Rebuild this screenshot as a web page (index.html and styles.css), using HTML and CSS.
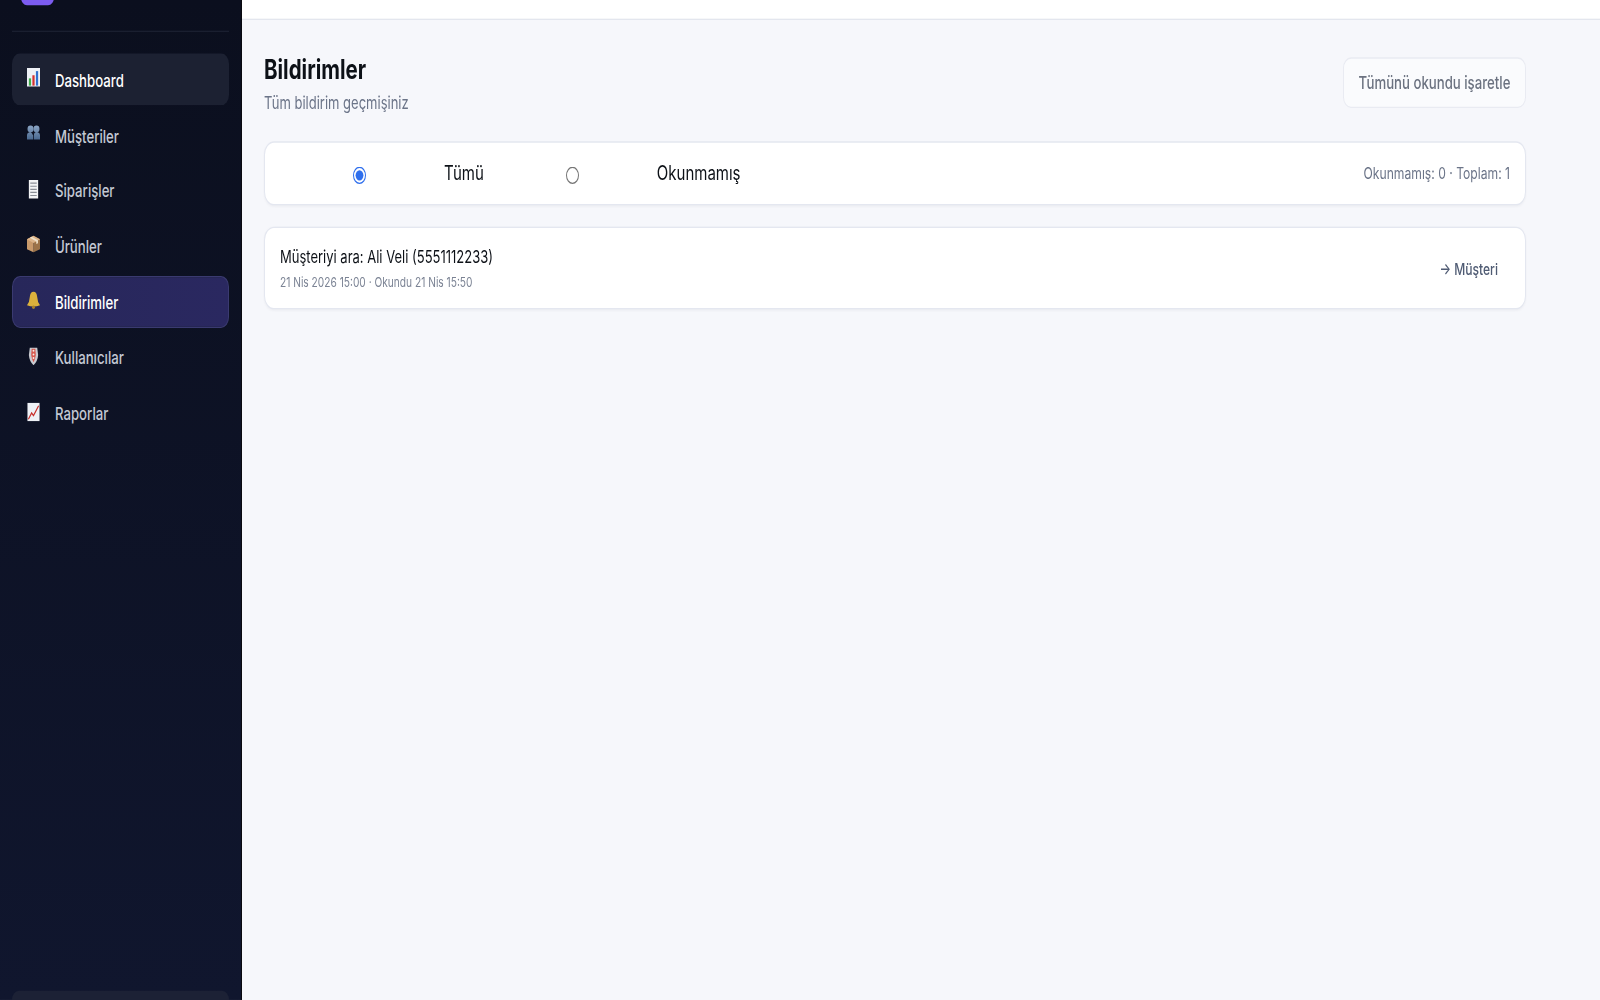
FILE: index.html
```html
<!DOCTYPE html>
<html lang="tr">
<head>
<meta charset="utf-8">
<title>Bildirimler</title>
<link rel="stylesheet" href="styles.css">
</head>
<body>
<div class="app">
  <aside class="sidebar">
    <div class="brand">
      <span class="logo"></span>
      <span class="brand-name">Kontrol yönetimi</span>
    </div>
    <nav class="nav">
      <a class="nav-item hover">
        <svg class="ico" viewBox="0 0 14 18" preserveAspectRatio="none"><rect x="0" y="0" width="14" height="18" fill="#eef1f6"/><rect x="2" y="10" width="2.4" height="7" fill="#3fae4a"/><rect x="5.8" y="7" width="2.4" height="10" fill="#d3322f"/><rect x="9.6" y="3" width="2.4" height="14" fill="#2f6fd0"/></svg>
        <span>Dashboard</span>
      </a>
      <a class="nav-item">
        <svg class="ico" viewBox="0 0 14 18" preserveAspectRatio="none"><defs><linearGradient id="people" x1="0" y1="0" x2="0" y2="1"><stop offset="0" stop-color="#8aa4c4"/><stop offset="1" stop-color="#49688f"/></linearGradient></defs><g fill="url(#people)"><path d="M3.800 1.500A3.200 3.200 0 0 1 3.800 8 6 6 0 0 1 6.600 11L6.600 15 0 15 0 11Q0 8 3.800 8A3.200 3.200 0 0 1 3.800 1.500Z"/><path d="M10.200 1.500A3.200 3.200 0 0 1 10.200 8Q14 8 14 11L14 15 7.400 15 7.400 11Q7.400 8 10.200 8A3.200 3.200 0 0 1 10.200 1.500Z"/></g></svg>
        <span>Müşteriler</span>
      </a>
      <a class="nav-item">
        <svg class="ico" viewBox="0 0 14 18" preserveAspectRatio="none"><rect x="2" y="0" width="10" height="18" fill="#f2f3f5"/><path d="M3.500 3H10.500M3.500 6H10.500M3.500 9H10.500M3.500 12H10.500M3.500 15H10.500" stroke="#8b8f97" stroke-width="1.100"/></svg>
        <span>Siparişler</span>
      </a>
      <a class="nav-item">
        <svg class="ico" viewBox="0 0 14 18" preserveAspectRatio="none"><path d="M7 1 14 4.500 14 14 7 17Z" fill="#9c7349"/><path d="M7 1 0 4.500 0 14 7 17Z" fill="#c99a6b"/><path d="M0 4.500 7 8 14 4.500 7 1Z" fill="#dcb48a"/><path d="M3.200 2.900 10 6.500 10 9 11.800 8.200 11.800 5.500 5 2Z" fill="#efe0c8"/></svg>
        <span>Ürünler</span>
      </a>
      <a class="nav-item active">
        <svg class="ico" viewBox="0 0 14 18" preserveAspectRatio="none"><path d="M7 1Q10.500 1 11 6 11.300 11 14 14 7 16.500 0 14 2.700 11 3 6 3.500 1 7 1Z" fill="#dcb13c"/><circle cx="7" cy="16" r="1.600" fill="#a9812a"/></svg>
        <span>Bildirimler</span>
      </a>
      <a class="nav-item">
        <svg class="ico" viewBox="0 0 14 18" preserveAspectRatio="none"><path d="M3 1H11L12 8Q11.500 14 7 18 2.500 14 2 8Z" fill="#c9ccd2"/><path d="M5 2H9L9.500 8Q9 12 7 15 5 12 4.500 8Z" fill="#d85a50"/><g fill="#f2ece6"><circle cx="7" cy="4" r="1"/><circle cx="7" cy="7.500" r="1"/><circle cx="7" cy="11" r="1"/></g></svg>
        <span>Kullanıcılar</span>
      </a>
      <a class="nav-item">
        <svg class="ico" viewBox="0 0 14 18" preserveAspectRatio="none"><rect x="0.500" y="0" width="13" height="18" fill="#eef1f6"/><path d="M1.500 16 5 10 7 12.500 12.500 3" fill="none" stroke="#c8302c" stroke-width="1.300"/></svg>
        <span>Raporlar</span>
      </a>
    </nav>
    <div class="side-foot"></div>
  </aside>
  <div class="main">
    <header class="topbar"></header>
    <main class="content">
      <div class="page-head">
        <div>
          <h1 class="title">Bildirimler</h1>
          <p class="subtitle">Tüm bildirim geçmişiniz</p>
        </div>
        <button class="mark-btn" type="button">Tümünü okundu işaretle</button>
      </div>
      <div class="card filter">
        <label class="opt first"><input type="radio" name="f" checked><span>Tümü</span></label>
        <label class="opt"><input type="radio" name="f"><span>Okunmamış</span></label>
        <span class="counts">Okunmamış: 0 · Toplam: 1</span>
      </div>
      <div class="card note">
        <div class="note-body">
          <div class="note-title">Müşteriyi ara: Ali Veli (5551112233)</div>
          <div class="note-meta">21 Nis 2026 15:00 · Okundu 21 Nis 15:50</div>
        </div>
        <a class="note-link">→ Müşteri</a>
      </div>
    </main>
  </div>
</div>
</body>
</html>
```
FILE: styles.css
```css
* { box-sizing: border-box; }
html, body { margin: 0; height: 100%; overflow: hidden; background: #f6f7fb; }
body { font-family: Inter, "Noto Sans", sans-serif; }
.app { display: flex; width: 1600px; height: 750px; transform: scaleY(1.3333); transform-origin: 0 0; }
.sidebar { width: 242px; flex: none; height: 750px; overflow: hidden; display: flex; flex-direction: column; padding: 0 12px; background: linear-gradient(180deg, #0b0f1e 0%, #10162e 100%); border-right: 1px solid #0a0a10; }
.brand { height: 24.200px; flex: none; display: flex; align-items: flex-end; gap: 13px; padding: 0 9px 19.400px; border-bottom: 1px solid #1a1f30; color: #fff; font-size: 14px; overflow: hidden; }
.logo { width: 33px; height: 20px; flex: none; margin-top: -16px; background: #7c5cf0; border-radius: 6px; }
.brand-name { margin: -16px 0 5px; line-height: 17px; white-space: nowrap; color: #c5cad6; }
.nav { display: flex; flex-direction: column; gap: 2.900px; margin-top: 15.800px; }
.nav-item { display: flex; align-items: center; gap: 15px; height: 38.800px; padding: 1px 0 0 14px; border-radius: 8px; border: 1px solid transparent; color: #c3c8d4; font-size: 13.200px; font-weight: 500; }
.nav-item.hover { background: #1c2132; color: #fff; }
.nav-item.active { background: linear-gradient(90deg, #27275a, #2a2860); border-color: #3a3a70; color: #fff; }
.ico { width: 13px; height: 14px; flex: none; margin-top: -3px; }
.side-foot { margin-top: auto; height: 7px; flex: none; background: #1c2135; border-radius: 8px 8px 0 0; }
.main { flex: 1; min-width: 0; display: flex; flex-direction: column; }
.topbar { height: 14.500px; flex: none; background: #fff; border-bottom: 1px solid #e3e6ee; }
.content { padding: 25.500px 74px 0 22px; }
.page-head { display: flex; justify-content: space-between; align-items: flex-start; }
.title { margin: 0; font-size: 20.500px; line-height: 24px; font-weight: 700; color: #0d1117; }
.subtitle { margin: 4.700px 0 0; font-size: 13px; line-height: 16px; color: #6b7488; }
.mark-btn { width: 183px; height: 38px; margin-top: 2.500px; padding: 0; background: #fafbfd; border: 1px solid #e9ebf2; border-radius: 8px; font: 500 13.200px Inter, sans-serif; color: #6b7280; }
.card { background: #fff; border: 1px solid #e4e7f0; border-radius: 10px; box-shadow: 0 1px 2px rgba(20,30,60,.04); }
.filter { display: flex; align-items: center; height: 48px; margin-top: 21.300px; padding: 0 15px; font-size: 15px; color: #0d1117; }
.opt { display: flex; align-items: center; }
.opt.first { margin-left: 73px; }
.opt input { width: 13px; height: 13px; margin: 3px 78px 0 0; accent-color: #2f6fed; }
.opt + .opt { margin-left: 82px; }
.counts { margin-left: auto; font-size: 12.150px; color: #6b7488; }
.note { display: flex; align-items: center; justify-content: space-between; height: 62.700px; margin-top: 15.750px; padding: 0 27px 0 15px; }
.note-body { margin-top: -1px; }
.note-title { font-size: 13px; line-height: 18px; color: #0d1117; }
.note-meta { margin-top: 3px; font-size: 10.200px; line-height: 14px; color: #7b8394; }
.note-link { font-size: 12.100px; font-weight: 500; color: #4f5b73; }
```
